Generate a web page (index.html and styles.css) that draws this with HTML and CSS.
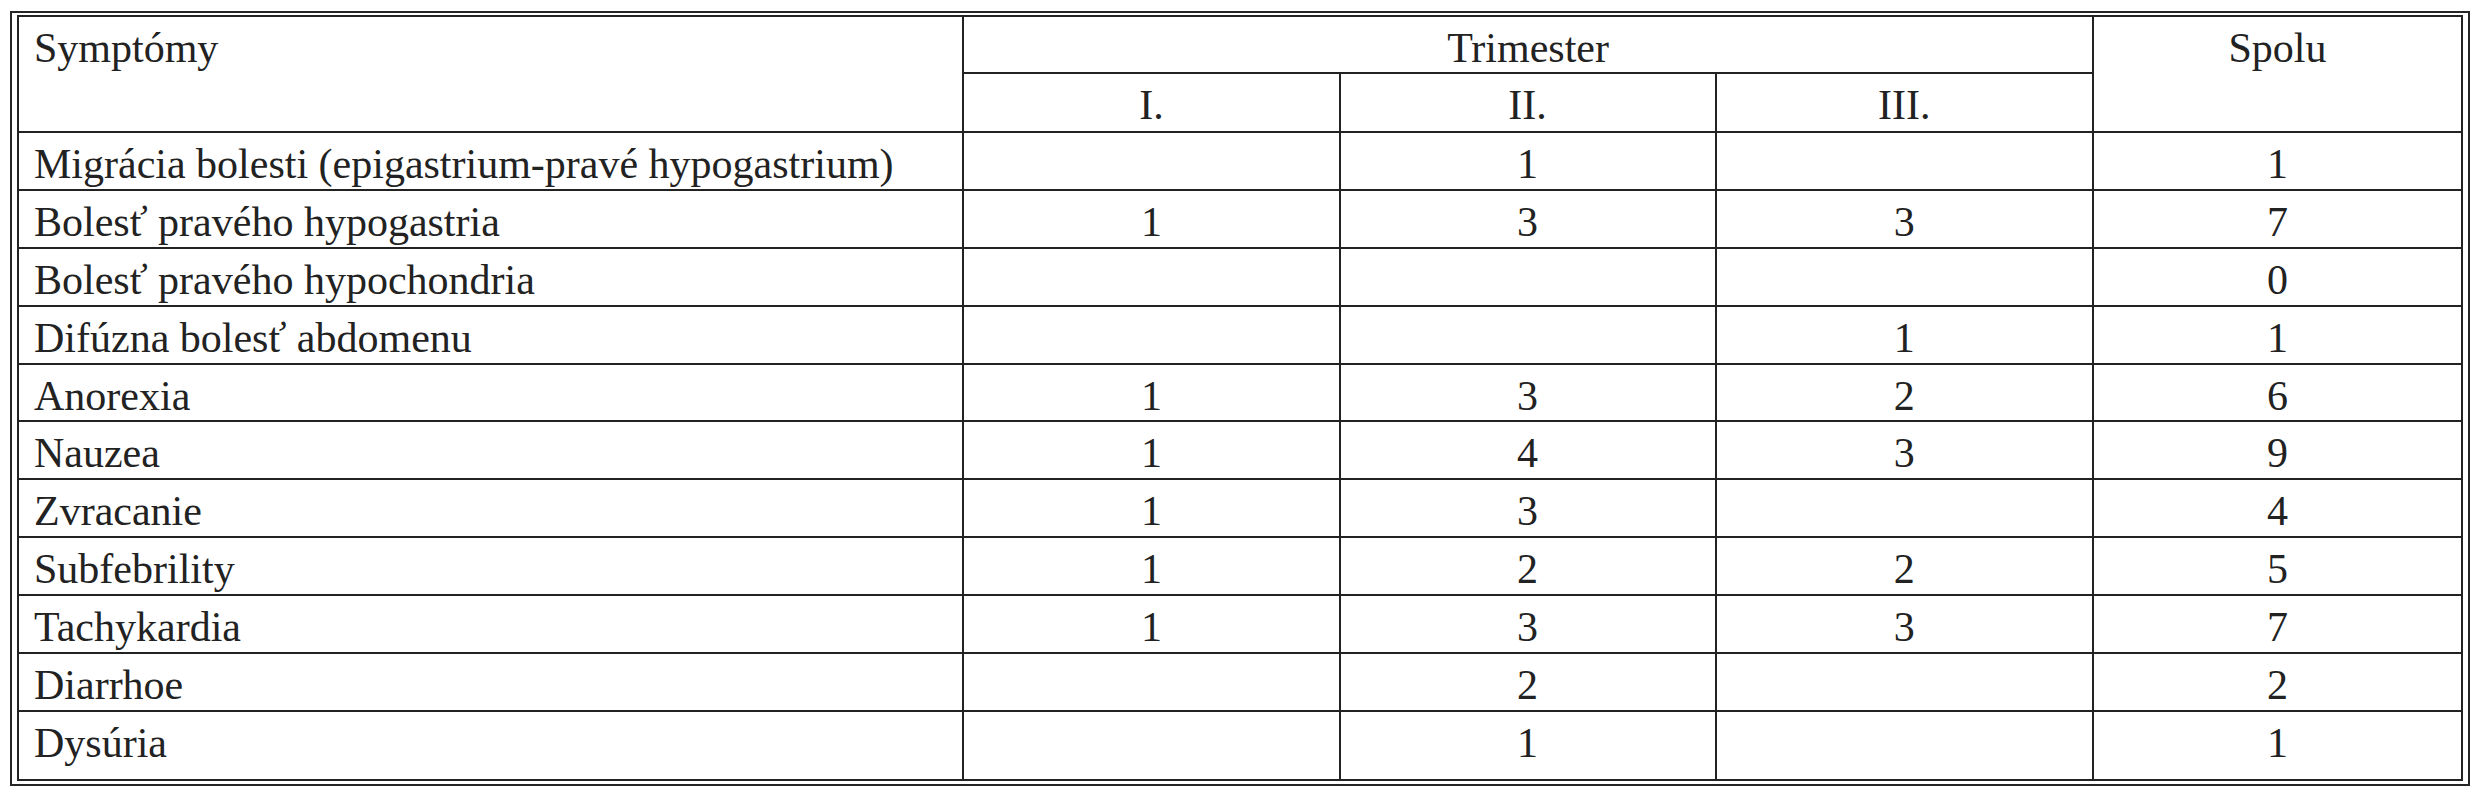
FILE: index.html
```html
<!DOCTYPE html>
<html lang="sk">
<head>
<meta charset="utf-8">
<title>Symptómy</title>
<link rel="stylesheet" href="styles.css">
</head>
<body>
<div class="frame">
<table class="symptoms">
  <colgroup>
    <col class="c-name">
    <col class="c-num">
    <col class="c-num">
    <col class="c-num3">
    <col class="c-total">
  </colgroup>
  <thead>
    <tr class="h1">
      <th class="name" rowspan="2">Symptómy</th>
      <th colspan="3">Trimester</th>
      <th rowspan="2">Spolu</th>
    </tr>
    <tr class="h2">
      <th>I.</th>
      <th>II.</th>
      <th>III.</th>
    </tr>
  </thead>
  <tbody>
    <tr><td class="name">Migrácia bolesti (epigastrium-pravé hypogastrium)</td><td></td><td>1</td><td></td><td>1</td></tr>
    <tr><td class="name">Bolesť pravého hypogastria</td><td>1</td><td>3</td><td>3</td><td>7</td></tr>
    <tr><td class="name">Bolesť pravého hypochondria</td><td></td><td></td><td></td><td>0</td></tr>
    <tr><td class="name">Difúzna bolesť abdomenu</td><td></td><td></td><td>1</td><td>1</td></tr>
    <tr><td class="name">Anorexia</td><td>1</td><td>3</td><td>2</td><td>6</td></tr>
    <tr><td class="name">Nauzea</td><td>1</td><td>4</td><td>3</td><td>9</td></tr>
    <tr><td class="name">Zvracanie</td><td>1</td><td>3</td><td></td><td>4</td></tr>
    <tr><td class="name">Subfebrility</td><td>1</td><td>2</td><td>2</td><td>5</td></tr>
    <tr><td class="name">Tachykardia</td><td>1</td><td>3</td><td>3</td><td>7</td></tr>
    <tr><td class="name">Diarrhoe</td><td></td><td>2</td><td></td><td>2</td></tr>
    <tr class="last"><td class="name">Dysúria</td><td></td><td>1</td><td></td><td>1</td></tr>
  </tbody>
</table>
</div>
</body>
</html>
```

FILE: styles.css
```css
html, body {
  margin: 0;
  padding: 0;
  background: #ffffff;
}

body {
  font-family: "Liberation Serif", "Times New Roman", serif;
  color: #222222;
}

.frame {
  margin: 11px 0 0 10px;
  width: 2446px;
  border: 2px solid #262626;
  padding: 2px 5px 3px 5px;
}

.symptoms {
  width: 100%;
  table-layout: fixed;
  border-collapse: collapse;
  border: 2px solid #222222;
  font-size: 42px;
  line-height: normal;
}

.c-name { width: 945px; }
.c-num { width: 376px; }
.c-num3 { width: 377px; }
.c-total { width: 369px; }

.symptoms th,
.symptoms td {
  border: 2px solid #222222;
  padding: 7px 0 0 0;
  font-weight: normal;
  text-align: center;
  vertical-align: top;
  white-space: nowrap;
}

.symptoms .name {
  text-align: left;
  padding-left: 15px;
}

.h1 { height: 57px; }
.h2 { height: 59px; }

.symptoms tbody tr { height: 57.9px; }
.symptoms tbody tr.last { height: 69px; }
```
